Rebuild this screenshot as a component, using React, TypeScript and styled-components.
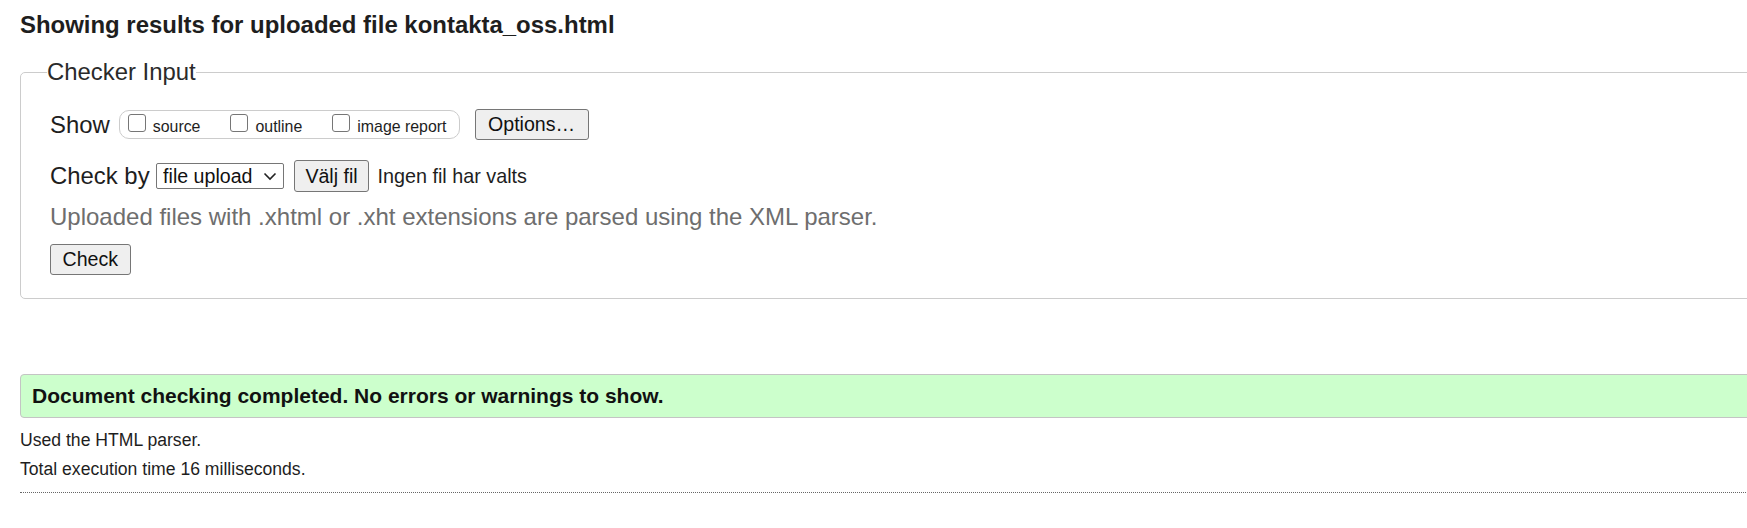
import React from "react";
import styled, { createGlobalStyle } from "styled-components";

const GlobalStyle = createGlobalStyle`
  html, body {
    margin: 0;
    padding: 0;
    background: #fff;
    overflow: hidden;
  }
  body {
    font-family: "Liberation Sans", Arial, sans-serif;
    font-size: 17.6px;
    color: #1e1e1e;
  }
`;

const Page = styled.div`
  width: 1800px;
  padding-left: 20px;
`;

const Heading = styled.h2`
  margin: 11px 0 0;
  font-size: 23.95px;
  line-height: 28px;
  font-weight: bold;
  color: #1e1e1e;
`;

const Fieldset = styled.fieldset`
  margin: 19px 0 0;
  padding: 0 0 23px 29px;
  border: 1px solid #ccc;
  border-radius: 5px;
  min-inline-size: 0;
`;

const Legend = styled.legend`
  padding: 0;
  margin-left: -3px;
  font-size: 23.9px;
  color: #2a2a2a;
`;

const Row = styled.div<{ $mt: number; $h: number }>`
  display: flex;
  align-items: center;
  height: ${(p) => p.$h}px;
  margin-top: ${(p) => p.$mt}px;
`;

const Label = styled.span`
  font-size: 23.9px;
  color: #1e1e1e;
`;

const Group = styled.div`
  display: flex;
  align-items: center;
  gap: 30px;
  box-sizing: border-box;
  height: 29px;
  margin-left: 9px;
  padding: 0 12px 0 8px;
  border: 1px solid #ccc;
  border-radius: 10px;
`;

const CheckItem = styled.label`
  display: flex;
  align-items: baseline;
  gap: 7px;
  font-size: 15.9px;
  line-height: 18px;
  color: #1e1e1e;
`;

const Box = styled.input`
  appearance: none;
  margin: 0;
  width: 18px;
  height: 18px;
  box-sizing: border-box;
  border: 1px solid #767676;
  border-radius: 3px;
  background: #fff;
`;

const Button = styled.button<{ $pad: number; $h: number; $ml?: number }>`
  box-sizing: border-box;
  height: ${(p) => p.$h}px;
  margin: 0 0 0 ${(p) => p.$ml ?? 0}px;
  padding: 0 ${(p) => p.$pad}px;
  font-family: "Liberation Sans", Arial, sans-serif;
  font-size: 19.6px;
  color: #111;
  background: #efefef;
  border: 1px solid #767676;
  border-radius: 3px;
`;

const SelectBox = styled.div`
  display: flex;
  align-items: center;
  box-sizing: border-box;
  width: 128px;
  height: 26px;
  margin-left: 6px;
  padding: 0 6px 0 0;
  border: 1px solid #767676;
  border-radius: 2px;
  background: #fff;
`;

const Select = styled.select`
  appearance: none;
  flex: 1;
  min-width: 0;
  height: 100%;
  margin: 0;
  padding: 0 0 0 6.5px;
  border: none;
  outline: none;
  background: transparent;
  font-family: "Liberation Sans", Arial, sans-serif;
  font-size: 19.6px;
  color: #111;
`;

const FileText = styled.span`
  margin-left: 8px;
  font-size: 19.8px;
  color: #1e1e1e;
`;

const Hint = styled.p`
  margin: 11px 0 0;
  font-size: 24px;
  color: #6e6e6e;
`;

const Success = styled.div`
  margin-top: 75px;
  padding: 9px 11px;
  border: 1px solid #c4c4c4;
  border-radius: 4px;
  background: #ccffcc;
  font-size: 21px;
  font-weight: bold;
  color: #111;
`;

const Info = styled.p<{ $mt: number }>`
  margin: ${(p) => p.$mt}px 0 0;
  line-height: 29px;
  color: #1e1e1e;
`;

const Rule = styled.hr`
  margin: 8px 0 0;
  border: none;
  border-top: 1px dotted #666;
  height: 0;
`;

const Chevron = () => (
  <svg width="14" height="9" viewBox="0 0 14 9">
    <polyline points="1.5,1.5 7,7 12.5,1.5" fill="none" stroke="#222" strokeWidth="1.6" />
  </svg>
);

export default function App() {
  return (
    <Page>
      <GlobalStyle />
      <Heading>Showing results for uploaded file kontakta_oss.html</Heading>
      <Fieldset>
        <Legend>Checker Input</Legend>
        <Row $mt={23} $h={31}>
          <Label>Show</Label>
          <Group>
            <CheckItem>
              <Box type="checkbox" />
              source
            </CheckItem>
            <CheckItem>
              <Box type="checkbox" />
              outline
            </CheckItem>
            <CheckItem>
              <Box type="checkbox" />
              image report
            </CheckItem>
          </Group>
          <Button $pad={12.5} $h={31} $ml={15}>
            Options…
          </Button>
        </Row>
        <Row $mt={20} $h={32}>
          <Label>Check by</Label>
          <SelectBox>
            <Select defaultValue="file">
              <option value="file">file upload</option>
            </Select>
            <Chevron />
          </SelectBox>
          <Button $pad={10.8} $h={32} $ml={10}>
            Välj fil
          </Button>
          <FileText>Ingen fil har valts</FileText>
        </Row>
        <Hint>Uploaded files with .xhtml or .xht extensions are parsed using the XML parser.</Hint>
        <Row $mt={13} $h={31}>
          <Button $pad={11.5} $h={31}>
            Check
          </Button>
        </Row>
      </Fieldset>
      <Success>Document checking completed. No errors or warnings to show.</Success>
      <Info $mt={8}>Used the HTML parser.</Info>
      <Info $mt={0}>Total execution time 16 milliseconds.</Info>
      <Rule />
    </Page>
  );
}
